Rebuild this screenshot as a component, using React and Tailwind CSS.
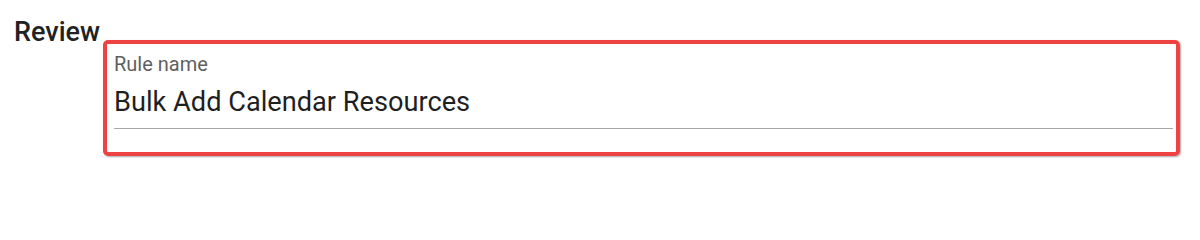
export default function App() {
    return (
        <div className="w-[1200px] h-[202px] bg-white font-['Roboto',sans-serif]">
            <h2 className="pt-[24px] pl-[14px] text-[27px] leading-[16px] font-medium text-[#222222] m-0">Review</h2>
            <div className="ml-[103px] mr-[20px] h-[116px] box-border border-4 border-[#ef4242] rounded-[5px] shadow-[1px_1px_2px_rgba(0,0,0,0.35)] pl-[7px] pr-[3px]">
                <div className="pt-[10px] text-[20px] leading-[20px] text-[#5f5f5f]">Rule name</div>
                <div className="mt-[14px] pb-[12px] text-[27.2px] leading-[28px] text-[#1f1f1f] border-b border-[#a8a8a8]">
                    Bulk Add Calendar Resources
                </div>
            </div>
        </div>
    );
}
